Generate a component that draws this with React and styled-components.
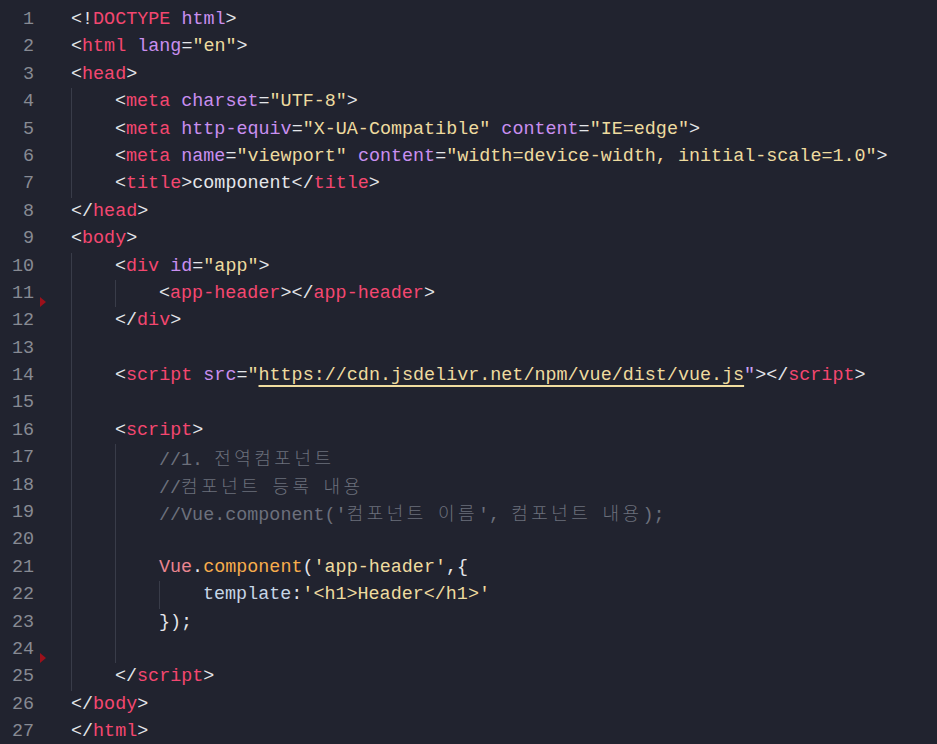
import React from "react";
import styled, { createGlobalStyle } from "styled-components";

const Global = createGlobalStyle`
  html, body { margin: 0; padding: 0; background: #21232f; }
  body { overflow: hidden; }
`;

const Editor = styled.div`
  width: 937px;
  height: 744px;
  background: #21232f;
  padding-top: 6px;
  box-sizing: border-box;
  overflow: hidden;
  font-family: "Liberation Mono", "DejaVu Sans Mono", monospace;
  font-size: 18.4px;
  line-height: 27.4px;
  color: #e4e6ea;
`;

const Row = styled.div`
  display: flex;
  height: 27.4px;
  white-space: pre;
`;

const Gutter = styled.div`
  position: relative;
  width: 71px;
  flex: none;
`;

const LineNo = styled.span`
  display: block;
  width: 34px;
  text-align: right;
  color: #878a93;
`;

const Marker = styled.span`
  position: absolute;
  left: 40px;
  top: 17px;
  width: 0;
  height: 0;
  border-top: 5.5px solid transparent;
  border-bottom: 5.5px solid transparent;
  border-left: 6px solid #9c111b;
`;

const Guide = styled.span`
  display: inline-block;
  width: 44px;
  height: 27.4px;
  box-sizing: border-box;
  border-left: 1px solid #393c49;
  flex: none;
`;

const Code = styled.span`
  display: inline-block;
`;

const colors = {
  p: "#e4e6ea",
  t: "#f44770",
  a: "#c98ff0",
  s: "#eedb9f",
  c: "#6c707c",
  v: "#ea8590",
  f: "#f8ad4c",
  k: "#c6d6e6",
  q: "#c9a2f2",
};

const Tok = styled.span`
  color: ${(p) => colors[p.$k] || colors.p};
  ${(p) =>
    p.$link &&
    `text-decoration: underline; text-decoration-color: #f0dca0; text-decoration-thickness: 2px; text-underline-offset: 5px;`}
`;

const Hangul = styled.span`
  font-family: "Noto Sans CJK KR", sans-serif;
  font-size: 18px;
  font-weight: 300;
  letter-spacing: 3.5px;
`;

function withHangul(text) {
  const parts = text.split(/([\uAC00-\uD7A3]+)/);
  return parts.map((part, i) =>
    /[\uAC00-\uD7A3]/.test(part) ? <Hangul key={i}>{part}</Hangul> : part
  );
}

const lines = [
  [0, [["p", "<!"], ["t", "DOCTYPE"], ["p", " "], ["a", "html"], ["p", ">"]]],
  [0, [["p", "<"], ["t", "html"], ["p", " "], ["a", "lang"], ["p", "="], ["s", '"en"'], ["p", ">"]]],
  [0, [["p", "<"], ["t", "head"], ["p", ">"]]],
  [1, [["p", "<"], ["t", "meta"], ["p", " "], ["a", "charset"], ["p", "="], ["s", '"UTF-8"'], ["p", ">"]]],
  [1, [["p", "<"], ["t", "meta"], ["p", " "], ["a", "http-equiv"], ["p", "="], ["s", '"X-UA-Compatible"'], ["p", " "], ["a", "content"], ["p", "="], ["s", '"IE=edge"'], ["p", ">"]]],
  [1, [["p", "<"], ["t", "meta"], ["p", " "], ["a", "name"], ["p", "="], ["s", '"viewport"'], ["p", " "], ["a", "content"], ["p", "="], ["s", '"width=device-width, initial-scale=1.0"'], ["p", ">"]]],
  [1, [["p", "<"], ["t", "title"], ["p", ">component</"], ["t", "title"], ["p", ">"]]],
  [0, [["p", "</"], ["t", "head"], ["p", ">"]]],
  [0, [["p", "<"], ["t", "body"], ["p", ">"]]],
  [1, [["p", "<"], ["t", "div"], ["p", " "], ["a", "id"], ["p", "="], ["s", '"app"'], ["p", ">"]]],
  [2, [["p", "<"], ["t", "app-header"], ["p", "></"], ["t", "app-header"], ["p", ">"]], true],
  [1, [["p", "</"], ["t", "div"], ["p", ">"]]],
  [1, []],
  [1, [["p", "<"], ["t", "script"], ["p", " "], ["a", "src"], ["p", "="], ["s", '"'], ["s", "https://cdn.jsdelivr.net/npm/vue/dist/vue.js", true], ["q", '"'], ["p", "></"], ["t", "script"], ["p", ">"]]],
  [1, []],
  [1, [["p", "<"], ["t", "script"], ["p", ">"]]],
  [2, [["c", "//1. 전역컴포넌트"]]],
  [2, [["c", "//컴포넌트 등록 내용"]]],
  [2, [["c", "//Vue.component('컴포넌트 이름', 컴포넌트 내용);"]]],
  [2, []],
  [2, [["v", "Vue"], ["p", "."], ["f", "component"], ["p", "("], ["s", "'app-header'"], ["p", ",{"]]],
  [3, [["k", "template"], ["p", ":"], ["s", "'<h1>Header</h1>'"]]],
  [2, [["p", "});"]]],
  [2, [], true],
  [1, [["p", "</"], ["t", "script"], ["p", ">"]]],
  [0, [["p", "</"], ["t", "body"], ["p", ">"]]],
  [0, [["p", "</"], ["t", "html"], ["p", ">"]]],
];

export default function App() {
  return (
    <>
      <Global />
      <Editor>
        {lines.map(([level, tokens, mark], i) => (
          <Row key={i}>
            <Gutter>
              <LineNo>{i + 1}</LineNo>
              {mark && <Marker />}
            </Gutter>
            {Array.from({ length: level }).map((_, g) => (
              <Guide key={g} />
            ))}
            <Code>
              {tokens.map(([k, text, link], j) => (
                <Tok key={j} $k={k} $link={link}>
                  {k === "c" ? withHangul(text) : text}
                </Tok>
              ))}
            </Code>
          </Row>
        ))}
      </Editor>
    </>
  );
}
